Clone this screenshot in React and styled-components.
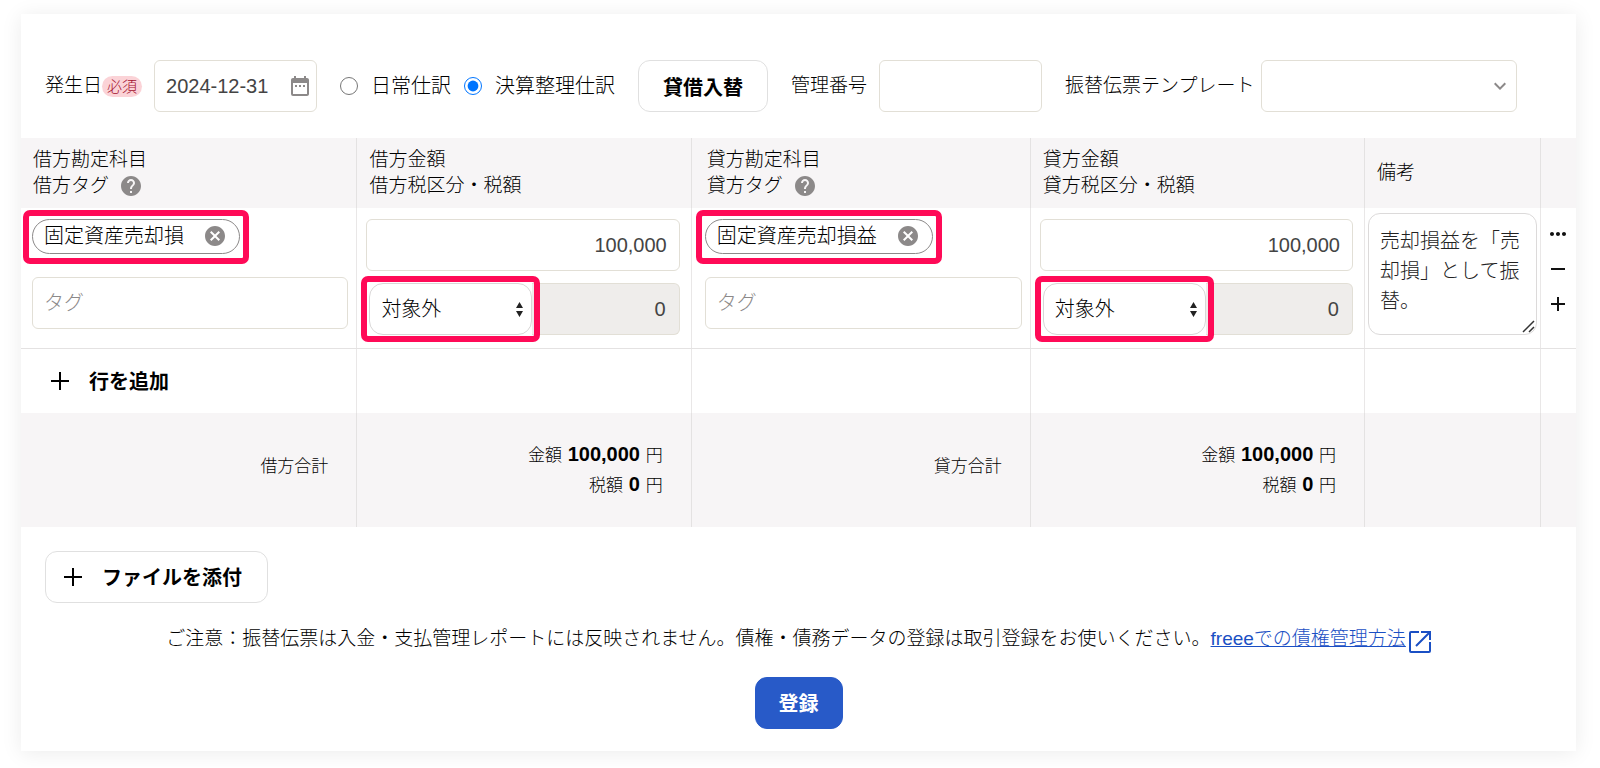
import React from 'react';
import styled, { createGlobalStyle } from 'styled-components';
import { MdDateRange, MdHelp, MdCancel, MdExpandMore, MdMoreHoriz } from 'react-icons/md';

const GlobalStyle = createGlobalStyle`
  * {
    box-sizing: border-box;
  }
  body {
    margin: 0;
    background: #ffffff;
    color: #000000;
    font-family: "Liberation Sans", "Noto Sans CJK JP", sans-serif;
    font-size: 19px;
    font-weight: 300;
    line-height: 26px;
  }
  input, select, textarea, button {
    font-family: inherit;
    font-size: 20px;
    font-weight: 300;
    color: inherit;
    margin: 0;
  }
`;

const Card = styled.form`
  margin: 14px 24px 16px 21px;
  padding-bottom: 22px;
  background: #ffffff;
  box-shadow: 0 2px 20px rgba(0, 0, 0, 0.08);
`;

const Toolbar = styled.div`
  display: flex;
  flex-wrap: wrap;
  align-items: center;
  gap: 23px;
  padding: 46px 24px 26px;
`;

const Field = styled.div`
  display: flex;
  align-items: center;
  gap: ${({ $gap }) => $gap || 12}px;
`;

const FieldLabel = styled.label`
  display: flex;
  align-items: center;
  white-space: nowrap;
`;

const Required = styled.span`
  padding: 0 5px;
  border-radius: 11px;
  background: #fbd3d7;
  color: #a30f2d;
  font-size: 15px;
  line-height: 21px;
`;

const RadioLabel = styled.label`
  font-size: 20px;
  white-space: nowrap;
`;

const Radio = styled.input`
  width: 18px;
  height: 18px;
`;

const Control = styled.div`
  position: relative;
  width: ${({ $width }) => $width || '100%'};
`;

const ControlIcon = styled.span`
  position: absolute;
  top: 50%;
  right: 5px;
  display: flex;
  transform: translateY(-50%);
  color: #8c8989;
  pointer-events: none;
`;

const TextInput = styled.input`
  display: block;
  width: 100%;
  height: 52px;
  padding: 0 12px 0 11px;
  border: 1px solid #e2dfd6;
  border-radius: 6px;
  background: #ffffff;
  color: #444444;
  text-align: ${({ $align }) => $align || 'left'};
  &:disabled {
    background: #efedeb;
  }
  &::placeholder {
    color: #8c8989;
  }
`;

const TemplateSelect = styled.select`
  display: block;
  width: 100%;
  height: 52px;
  padding: 0 12px;
  border: 1px solid #e2dfd6;
  border-radius: 6px;
  background: #ffffff;
  appearance: none;
`;

const Button = styled.button`
  display: inline-flex;
  align-items: center;
  gap: 20px;
  height: 52px;
  padding: 0 24px;
  border: 1px solid #e0e0e0;
  border-radius: 12px;
  background: #ffffff;
  font-weight: 700;
  white-space: nowrap;
`;

const AttachButton = styled(Button)`
  padding: 0 25px 0 18px;
`;

const SubmitButton = styled(Button)`
  padding: 0 23px;
  border-color: #285ac8;
  background: #285ac8;
  color: #ffffff;
`;

const AddRowButton = styled(Button)`
  padding: 0 20px;
  border: 0;
`;

const Table = styled.table`
  width: 100%;
  border-collapse: collapse;
  table-layout: fixed;
`;

const Col = styled.col`
  width: ${({ $width }) => $width};
`;

const HeadCell = styled.th`
  height: 70px;
  padding: 0 12px;
  border-left: 1px solid #e4e2e2;
  background: #f7f5f6;
  font-weight: 300;
  text-align: left;
  white-space: nowrap;
  &:first-child {
    border-left: 0;
  }
  &:nth-child(3) {
    padding-left: 15px;
  }
`;

const HeadLine = styled.div`
  display: flex;
  align-items: center;
  gap: 10px;
  height: 26px;
  svg {
    color: #8c8989;
  }
`;

const Cell = styled.td`
  padding: ${({ $padding }) => $padding || '0 10px'};
  border-left: 1px solid #e9e7e7;
  border-bottom: 1px solid #e4e2e2;
  vertical-align: top;
  &:first-child {
    border-left: 0;
  }
`;

const AddCell = styled.td`
  height: 64px;
  padding: 0 10px;
  border-left: 1px solid #e9e7e7;
  &:first-child {
    border-left: 0;
  }
`;

const TotalCell = styled.td`
  height: 114px;
  padding: 0 28px;
  border-left: 1px solid #e4e2e2;
  background: #f7f5f6;
  font-size: 17px;
  line-height: 28px;
  text-align: right;
  &:first-child {
    border-left: 0;
  }
  strong {
    margin: 0 1px;
    font-size: 20px;
    font-weight: 700;
  }
`;

const TotalLabel = styled(TotalCell)`
  padding-bottom: 6px;
`;

const Stack = styled.div`
  display: flex;
  flex-direction: column;
  align-items: flex-start;
  gap: ${({ $gap }) => $gap}px;
`;

const Highlight = styled.div`
  position: relative;
  &::after {
    content: "";
    position: absolute;
    inset: ${({ $inset }) => $inset};
    border: 6px solid #ff0a57;
    border-radius: 7px;
    pointer-events: none;
  }
`;

const Chip = styled.div`
  display: flex;
  align-items: center;
  gap: 19px;
  height: 35px;
  padding: 0 12px 2px 11px;
  border: 1px solid #8c8989;
  border-radius: 18px;
  font-size: 20px;
  white-space: nowrap;
`;

const IconButton = styled.button`
  display: flex;
  padding: 0;
  border: 0;
  background: none;
  color: ${({ $color }) => $color || '#111111'};
`;

const TaxRow = styled.div`
  display: flex;
  width: 100%;
  padding-left: 3px;
`;

const TaxSelect = styled.select`
  display: block;
  width: 163px;
  height: 52px;
  padding: 0 11px;
  border: 1px solid #d8d6d6;
  border-radius: 14px;
  background: #ffffff;
  appearance: none;
`;

const SelectArrows = styled.svg`
  position: absolute;
  top: 19px;
  right: 9px;
  pointer-events: none;
`;

const TaxAmount = styled.div`
  flex: 1;
  input {
    padding-right: 13px;
    border-left: 0;
    border-top-left-radius: 0;
    border-bottom-left-radius: 0;
  }
`;

const Memo = styled.textarea`
  display: block;
  width: 100%;
  height: 122px;
  padding: 12px 11px;
  border: 1px solid #dcdada;
  border-radius: 12px;
  color: #222222;
  line-height: 30px;
  resize: none;
`;

const ResizeGrip = styled.svg`
  position: absolute;
  right: 2px;
  bottom: 2px;
  pointer-events: none;
`;

const RowActions = styled.div`
  display: flex;
  flex-direction: column;
  align-items: center;
  gap: 11px;
`;

const AttachArea = styled.div`
  padding: 24px 24px 20px;
`;

const Notice = styled.p`
  display: flex;
  justify-content: center;
  margin: 0 0 22px;
  line-height: 32px;
`;

const NoticeLink = styled.a`
  display: flex;
  align-items: center;
  gap: 3px;
  color: #1a4fc4;
  svg {
    margin-top: 6px;
  }
`;

const SubmitArea = styled.div`
  display: flex;
  justify-content: center;
`;

function Plus() {
  return (
    <svg width="18" height="18" viewBox="0 0 18 18" fill="none" stroke="currentColor" strokeWidth="2">
      <path d="M9 0v18M0 9h18" />
    </svg>
  );
}

function OpenIcon() {
  return (
    <svg width="22" height="22" viewBox="0 0 22 22" fill="none" stroke="currentColor" strokeWidth="2">
      <path d="M10 1H2Q1 1 1 2v18q0 1 1 1h18q1 0 1-1v-9" />
      <path d="M12 1h9v8M20.500 1.500L7 15" />
    </svg>
  );
}

function AccountCell({ name, $padding }) {
  return (
    <Cell $padding={$padding}>
      <Stack $gap={23}>
        <Highlight $inset="-9px -9px -10px -9px">
          <Chip>
            {name}
            <IconButton type="button" aria-label={`${name}を削除`} $color="#8c8989">
              <MdCancel size={24} />
            </IconButton>
          </Chip>
        </Highlight>
        <TextInput aria-label="タグ" placeholder="タグ" />
      </Stack>
    </Cell>
  );
}

function AmountCell({ side, amount, tax }) {
  return (
    <Cell $padding="11px 11px 13px 9px">
      <Stack $gap={12}>
        <TextInput aria-label={`${side}金額`} defaultValue={amount} $align="right" />
        <TaxRow>
          <Highlight $inset="-7px -8px">
            <TaxSelect aria-label={`${side}税区分`}>
              <option>対象外</option>
            </TaxSelect>
            <SelectArrows width="7" height="15" viewBox="0 0 7 15" fill="#222222">
              <path d="M3.5 0L7 6H0zM3.5 15L7 9H0z" />
            </SelectArrows>
          </Highlight>
          <TaxAmount>
            <TextInput aria-label={`${side}税額`} defaultValue={tax} $align="right" disabled />
          </TaxAmount>
        </TaxRow>
      </Stack>
    </Cell>
  );
}

function Totals({ amount, tax }) {
  return (
    <TotalCell>
      <div>金額 <strong>{amount}</strong> 円</div>
      <div>税額 <strong>{tax}</strong> 円</div>
    </TotalCell>
  );
}

export default function App() {
  return (
    <>
      <GlobalStyle />
      <Card onSubmit={(e) => e.preventDefault()}>
        <Toolbar>
          <Field>
            <FieldLabel htmlFor="date">発生日<Required>必須</Required></FieldLabel>
            <Control $width="163px">
              <TextInput id="date" defaultValue="2024-12-31" />
              <ControlIcon><MdDateRange size={24} /></ControlIcon>
            </Control>
          </Field>
          <Field $gap={13}>
            <Radio type="radio" name="kind" id="daily" />
            <RadioLabel htmlFor="daily">日常仕訳</RadioLabel>
            <Radio type="radio" name="kind" id="closing" defaultChecked />
            <RadioLabel htmlFor="closing">決算整理仕訳</RadioLabel>
          </Field>
          <Button type="button">貸借入替</Button>
          <Field>
            <FieldLabel htmlFor="number">管理番号</FieldLabel>
            <Control $width="163px">
              <TextInput id="number" />
            </Control>
          </Field>
          <Field $gap={7}>
            <FieldLabel htmlFor="template">振替伝票テンプレート</FieldLabel>
            <Control $width="256px">
              <TemplateSelect id="template">
                <option value="" />
              </TemplateSelect>
              <ControlIcon><MdExpandMore size={24} /></ControlIcon>
            </Control>
          </Field>
        </Toolbar>

        <Table>
          <colgroup>
            <Col $width="21.6%" />
            <Col $width="21.5%" />
            <Col $width="21.8%" />
            <Col $width="21.5%" />
            <Col $width="11.3%" />
            <Col />
          </colgroup>
          <thead>
            <tr>
              <HeadCell>
                <HeadLine>借方勘定科目</HeadLine>
                <HeadLine>借方タグ<MdHelp size={24} /></HeadLine>
              </HeadCell>
              <HeadCell>
                <HeadLine>借方金額</HeadLine>
                <HeadLine>借方税区分・税額</HeadLine>
              </HeadCell>
              <HeadCell>
                <HeadLine>貸方勘定科目</HeadLine>
                <HeadLine>貸方タグ<MdHelp size={24} /></HeadLine>
              </HeadCell>
              <HeadCell>
                <HeadLine>貸方金額</HeadLine>
                <HeadLine>貸方税区分・税額</HeadLine>
              </HeadCell>
              <HeadCell>備考</HeadCell>
              <HeadCell />
            </tr>
          </thead>
          <tbody>
            <tr>
              <AccountCell name="固定資産売却損" $padding="11px 8px 19px 11px" />
              <AmountCell side="借方" amount="100,000" tax="0" />
              <AccountCell name="固定資産売却損益" $padding="11px 8px 19px 13px" />
              <AmountCell side="貸方" amount="100,000" tax="0" />
              <Cell $padding="5px 3px">
                <Control>
                  <Memo aria-label="備考" defaultValue="売却損益を「売却損」として振替。" />
                  <ResizeGrip width="13" height="13" viewBox="0 0 13 13" fill="none" stroke="#333333" strokeWidth="1.5">
                    <path d="M1 12L12 1M7 12L12 7" />
                  </ResizeGrip>
                </Control>
              </Cell>
              <Cell $padding="14px 0">
                <RowActions>
                  <IconButton type="button" aria-label="メニュー"><MdMoreHoriz size={24} /></IconButton>
                  <IconButton type="button" aria-label="行を削除">
                    <svg width="24" height="24" viewBox="0 0 24 24" stroke="currentColor" strokeWidth="2">
                      <path d="M5 12h14" />
                    </svg>
                  </IconButton>
                  <IconButton type="button" aria-label="行を挿入">
                    <svg width="24" height="24" viewBox="0 0 24 24" stroke="currentColor" strokeWidth="2">
                      <path d="M5 12h14M12 5v14" />
                    </svg>
                  </IconButton>
                </RowActions>
              </Cell>
            </tr>
            <tr>
              <AddCell><AddRowButton type="button"><Plus />行を追加</AddRowButton></AddCell>
              <AddCell />
              <AddCell />
              <AddCell />
              <AddCell />
              <AddCell />
            </tr>
          </tbody>
          <tfoot>
            <tr>
              <TotalLabel>借方合計</TotalLabel>
              <Totals amount="100,000" tax="0" />
              <TotalLabel>貸方合計</TotalLabel>
              <Totals amount="100,000" tax="0" />
              <TotalCell />
              <TotalCell />
            </tr>
          </tfoot>
        </Table>

        <AttachArea>
          <AttachButton type="button"><Plus />ファイルを添付</AttachButton>
        </AttachArea>
        <Notice>
          ご注意：振替伝票は入金・支払管理レポートには反映されません。債権・債務データの登録は取引登録をお使いください。
          <NoticeLink href="#receivables">freeeでの債権管理方法<OpenIcon /></NoticeLink>
        </Notice>
        <SubmitArea>
          <SubmitButton type="submit">登録</SubmitButton>
        </SubmitArea>
      </Card>
    </>
  );
}
